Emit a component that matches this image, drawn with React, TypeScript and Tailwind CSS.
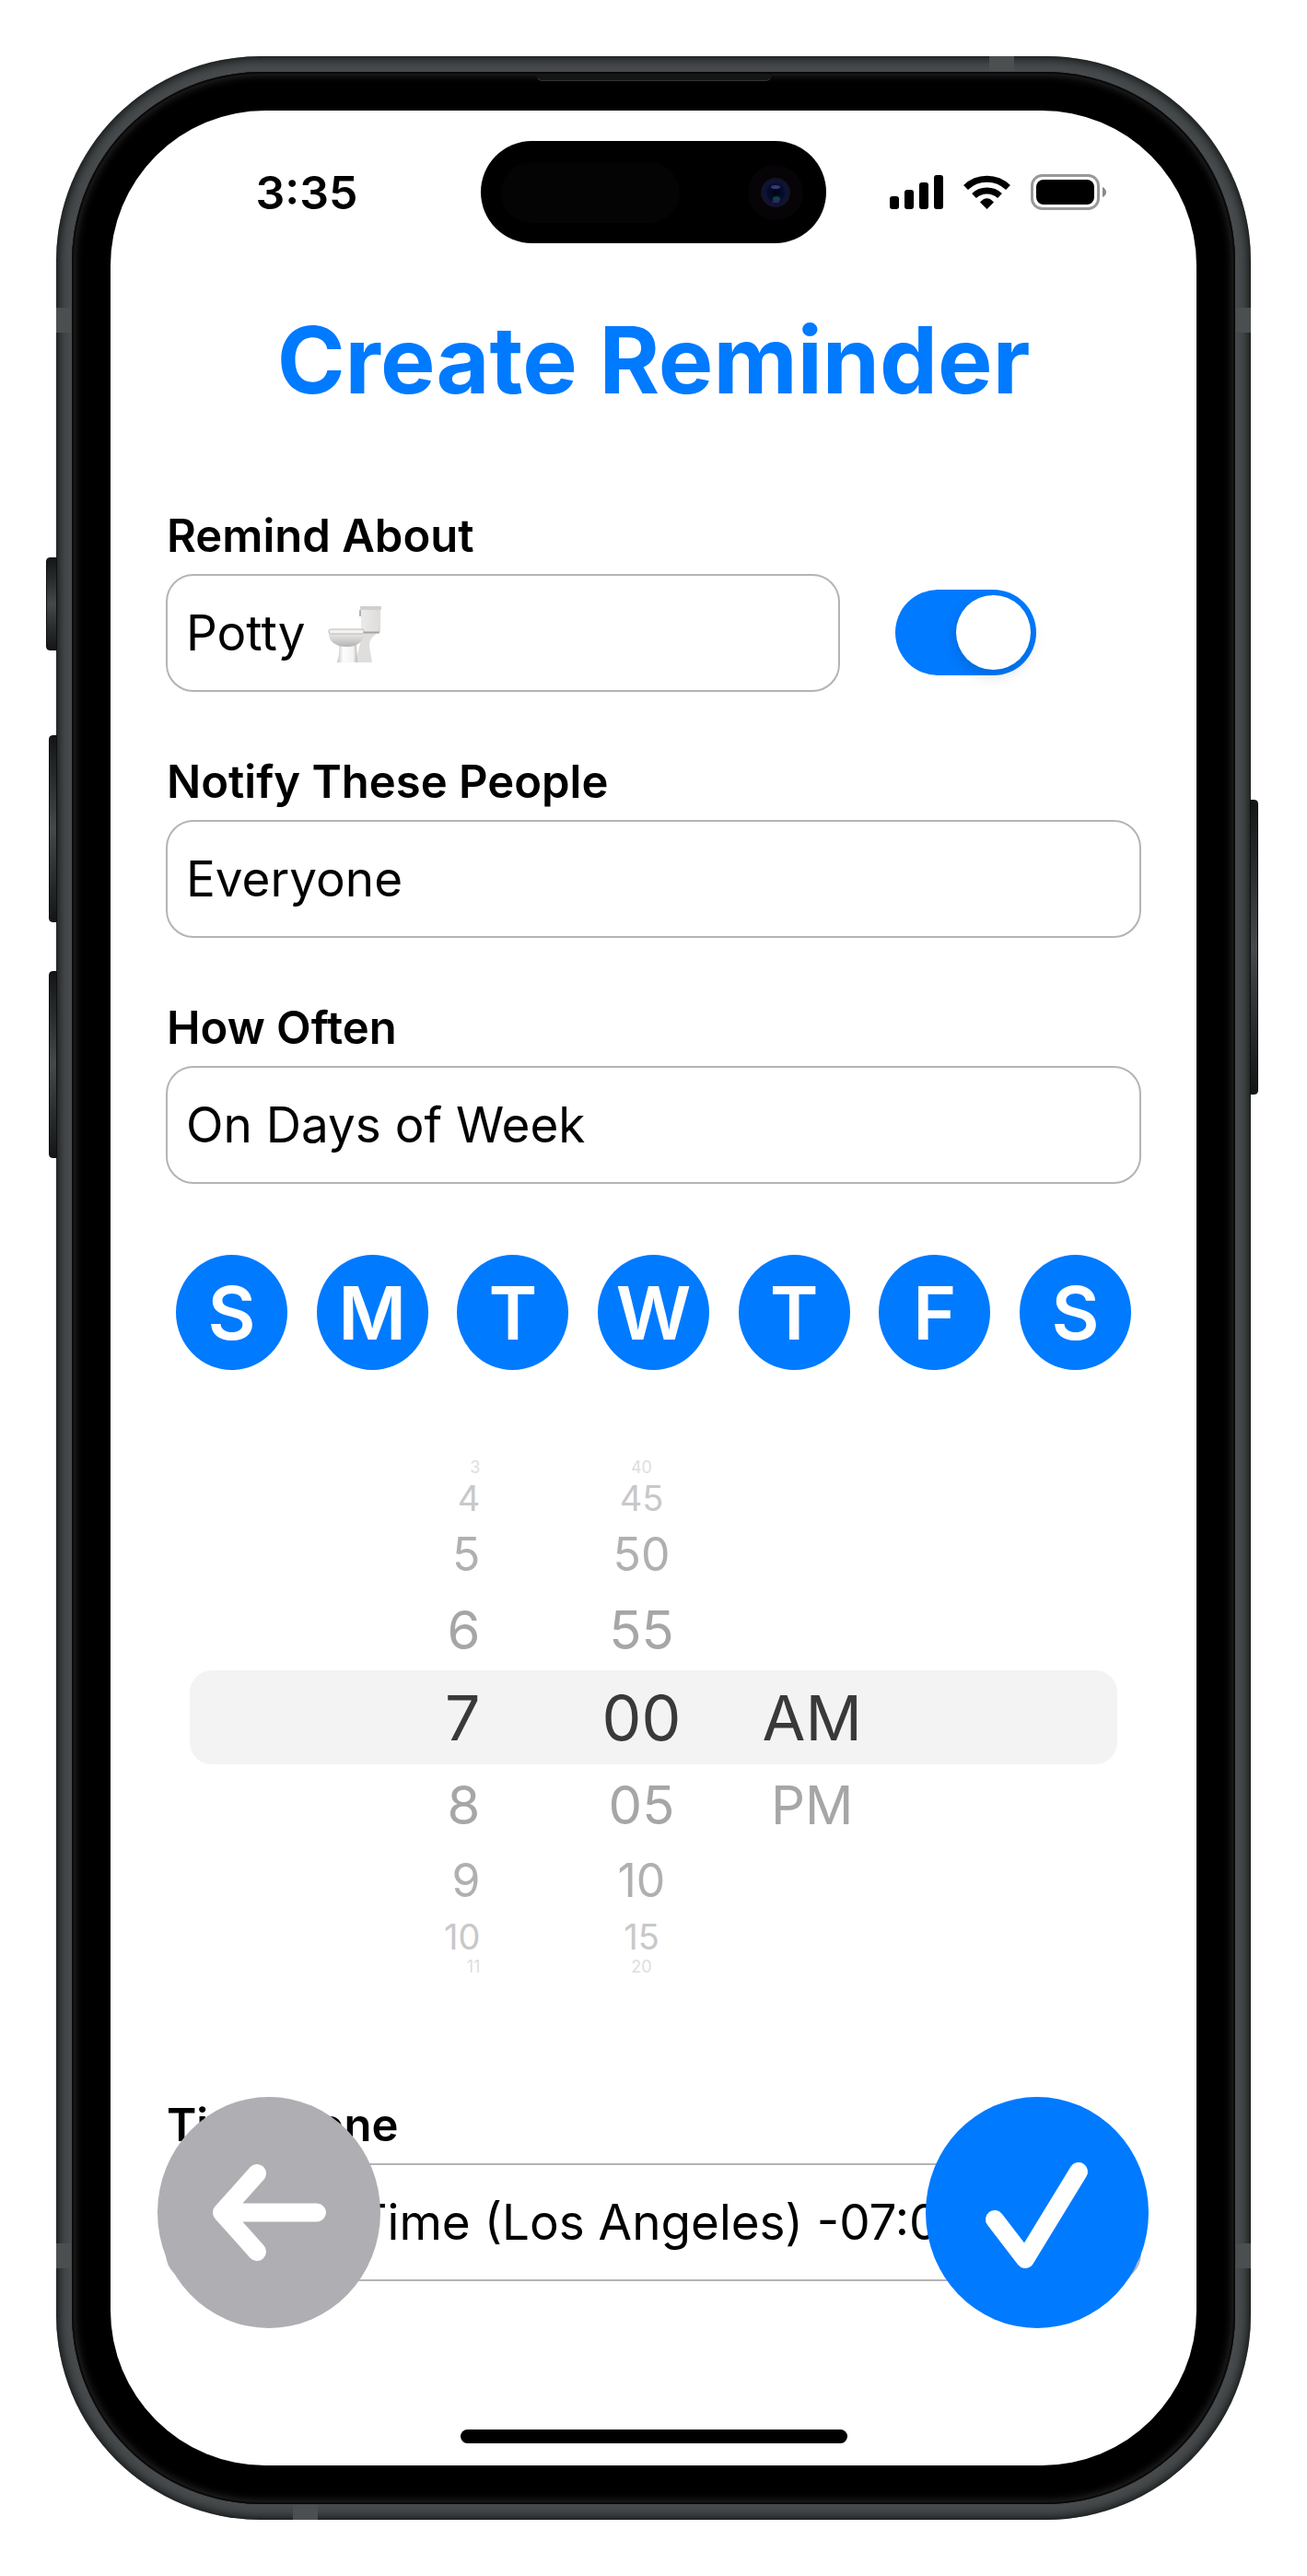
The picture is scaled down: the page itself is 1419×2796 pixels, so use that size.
import { useState } from "react";
import type { ReactNode } from "react";

const DAYS = ["S", "M", "T", "W", "T", "F", "S"];
const DAY_NAMES = ["Sunday", "Monday", "Tuesday", "Wednesday", "Thursday", "Friday", "Saturday"];

const ROWS = [
  { hour: "3", minute: "40", style: "h-5 text-[18px] text-[#dedede]" },
  { hour: "4", minute: "45", style: "h-[46px] text-[38px] text-[#c8c8c8]" },
  { hour: "5", minute: "50", style: "h-[76px] text-[50px] text-[#b0b0b0]" },
  { hour: "6", minute: "55", style: "h-[88px] text-[58px] text-[#a6a6a6]" },
  { hour: "7", minute: "00", period: "AM", style: "h-[102px] rounded-[24px] bg-[#f3f3f3] text-[68px] text-[#393939]" },
  { hour: "8", minute: "05", period: "PM", style: "h-[88px] text-[58px] text-[#a6a6a6]" },
  { hour: "9", minute: "10", style: "h-[76px] text-[50px] text-[#b0b0b0]" },
  { hour: "10", minute: "15", style: "h-[46px] text-[38px] text-[#c8c8c8]" },
  { hour: "11", minute: "20", style: "h-5 text-[18px] text-[#dedede]" },
];

function Toilet() {
  return (
    <svg className="h-[66px] w-[66px] shrink-0" viewBox="0 0 66 66" role="img" aria-label="toilet">
      <defs>
        <linearGradient id="tank" x1="0" x2="1">
          <stop offset="0" stopColor="#ebeae9" />
          <stop offset="1" stopColor="#dddcdb" />
        </linearGradient>
        <linearGradient id="bowl" x1="0" y1="0" x2="0" y2="1">
          <stop offset="0" stopColor="#efeeed" />
          <stop offset="1" stopColor="#b5b4b3" />
        </linearGradient>
        <linearGradient id="foot" x1="0" x2="1">
          <stop offset="0" stopColor="#c4c4c4" />
          <stop offset="0.3" stopColor="#fdfdfd" />
          <stop offset="0.8" stopColor="#f2f2f2" />
          <stop offset="1" stopColor="#b4b4b4" />
        </linearGradient>
      </defs>
      <path d="M40 31 H58 C50 35 47 40 47 46 L50 64 H32 Z" fill="#dfdedd" />
      <path d="M14 45 H33 L34 64 H12 Q15 55 14 45 Z" fill="url(#foot)" />
      <rect x="38" y="4" width="21" height="27" fill="url(#tank)" />
      <rect x="37" y="3" width="23" height="4" rx="1" fill="#d0cfce" />
      <path d="M37 7 V14" stroke="#b5b4b3" strokeWidth="2" />
      <path d="M3 31 C2 41 10 47 23 47 C35 47 41 41 41 31 Z" fill="url(#bowl)" />
      <rect x="3" y="28" width="38" height="5" rx="2" fill="#f2f1f0" stroke="#b8b7b5" strokeWidth="1" />
      <path d="M41 31.500 H58" stroke="#a5a4a3" strokeWidth="2" />
    </svg>
  );
}

function StatusIcons() {
  return (
    <svg className="h-[40px] w-[236px]" viewBox="966 188 236 40" aria-hidden="true">
      <rect x="966" y="212" width="10" height="14" rx="3" />
      <rect x="982" y="205" width="10" height="21" rx="3" />
      <rect x="998" y="197" width="10" height="29" rx="3" />
      <rect x="1014" y="189" width="10" height="37" rx="3" />
      <g fill="none" stroke="#000" strokeWidth="7">
        <path d="M1048.500 202.500 A33 33 0 0 1 1094.500 202.500" />
        <path d="M1057.500 211.500 A20.500 20.500 0 0 1 1085.500 211.500" />
      </g>
      <path d="M1071.500 226 L1064 218.500 Q1071.500 210 1079 218.500 Z" />
      <rect x="1120.500" y="189.500" width="72" height="36" rx="11" fill="none" stroke="#999" strokeWidth="3" />
      <rect x="1125" y="194" width="63" height="27" rx="8" />
      <path d="M1197 202 Q1201 204 1201 207.500 Q1201 211 1197 213 Z" fill="#8a8a8a" />
    </svg>
  );
}

function DynamicIsland() {
  return (
    <div className="flex h-[111px] w-[375px] shrink-0 items-center justify-between rounded-full bg-black pr-[25px] pl-[22px]">
      <span className="h-[66px] w-[194px] rounded-full bg-[#040404]" />
      <svg className="h-[60px] w-[60px]" viewBox="0 0 60 60" aria-hidden="true">
        <defs>
          <radialGradient id="lens">
            <stop offset="0" stopColor="#02030f" />
            <stop offset="0.7" stopColor="#060b2c" />
            <stop offset="1" stopColor="#0d1440" />
          </radialGradient>
        </defs>
        <circle cx="30" cy="30" r="30" fill="#060407" />
        <circle cx="30" cy="30" r="16" fill="#11142a" />
        <circle cx="30" cy="30" r="12" fill="url(#lens)" />
        <ellipse cx="30" cy="24" rx="5" ry="2" fill="#333a78" />
        <ellipse cx="31" cy="37" rx="4" ry="3" fill="#0f4148" />
        <ellipse cx="30" cy="40" rx="4" ry="1" fill="#4a1770" />
      </svg>
    </div>
  );
}

function Field({ id, label, children }: { id: string; label: string; children: ReactNode }) {
  return (
    <div className="flex flex-col gap-[10px]">
      <label htmlFor={id} className="px-px text-[49px] leading-[62px] font-semibold">
        {label}
      </label>
      {children}
    </div>
  );
}

const BOX = "h-[128px] rounded-[30px] border-2 border-[#b4b4b7] bg-white px-[20px] pt-[2px] text-[53px] text-black";

function PickerField({ id, label, value }: { id: string; label: string; value: string }) {
  return (
    <Field id={id} label={label}>
      <select id={id} defaultValue={value} className={`${BOX} w-full appearance-none`}>
        <option>{value}</option>
      </select>
    </Field>
  );
}

function Hardware() {
  const band = "absolute bg-[#4b4f50]";
  const key = "absolute border border-[#0d0f10] bg-linear-to-b from-[#141616] via-[#45494b] to-[#141616]";
  return (
    <div aria-hidden="true">
      <span className={`${key} top-[544px] -left-[11px] h-[101px] w-[12px] rounded-l-[4px]`} />
      <span className={`${key} top-[737px] -left-[8px] h-[203px] w-[9px] rounded-l-[4px]`} />
      <span className={`${key} top-[993px] -left-[8px] h-[203px] w-[9px] rounded-l-[4px]`} />
      <span className={`${key} top-[807px] -right-[8px] h-[320px] w-[9px] rounded-r-[4px]`} />
      <span className={`${band} top-[273px] left-0 h-[27px] w-[16px]`} />
      <span className={`${band} top-[273px] right-0 h-[27px] w-[16px]`} />
      <span className={`${band} bottom-[273px] left-0 h-[27px] w-[16px]`} />
      <span className={`${band} right-0 bottom-[273px] h-[27px] w-[16px]`} />
      <span className={`${band} top-0 right-[257px] h-[16px] w-[27px]`} />
      <span className={`${band} bottom-0 left-[257px] h-[16px] w-[27px]`} />
      <span className="absolute top-[19px] left-1/2 h-[8px] w-[255px] -translate-x-1/2 rounded-b-[6px] border-b border-[#333] bg-[#151717]" />
    </div>
  );
}

export default function App() {
  const [enabled, setEnabled] = useState(true);
  const [days, setDays] = useState(DAYS.map(() => true));

  return (
    <div className="bg-white p-[61px] font-['Inter',sans-serif] text-black">
      <div className="relative rounded-[222px] bg-[#474b4d] p-[17px] shadow-[inset_0_0_12px_2px_#0b0d0d]">
        <div className="rounded-[206px] bg-black p-[42px] shadow-[inset_0_0_0_2px_#0a0a0a,inset_0_0_10px_3px_#2c2c2c]">
          <main className="relative flex flex-col overflow-hidden rounded-[168px] bg-white px-[60px] pb-[200px]">
            <header className="-mx-[60px] flex items-center pt-[33px]">
              <time className="flex-1 pr-[4px] pl-[28px] text-center text-[50px] leading-[60px] font-semibold">3:35</time>
              <DynamicIsland />
              <div className="flex flex-1 justify-center pr-[30px] pl-[2px]">
                <StatusIcons />
              </div>
            </header>

            <h1 className="mt-[67px] text-center text-[100px] leading-[120px] font-bold text-[#007aff]">
              Create Reminder
            </h1>

            <form className="mt-[100px] flex flex-col gap-[67px]" onSubmit={(e) => e.preventDefault()}>
              <div className="flex items-end gap-[60px]">
                <div className="w-[732px]">
                  <Field id="about" label="Remind About">
                    <div className={`${BOX} flex items-center gap-[16px]`}>
                      <input id="about" defaultValue="Potty" className="w-[136px] bg-transparent outline-none" />
                      <Toilet />
                    </div>
                  </Field>
                </div>
                <label className="relative mb-[18px] h-[93px] w-[153px]">
                  <input
                    type="checkbox"
                    role="switch"
                    aria-label="Reminder enabled"
                    checked={enabled}
                    onChange={(e) => setEnabled(e.target.checked)}
                    className="peer block h-full w-full appearance-none rounded-full bg-[#e9e9eb] checked:bg-[#007aff]"
                  />
                  <span className="pointer-events-none absolute top-[6px] left-[6px] h-[81px] w-[81px] rounded-full bg-white shadow-[0_6px_16px_rgba(0,0,0,0.15)] peer-checked:right-[6px] peer-checked:left-auto" />
                </label>
              </div>
              <PickerField id="people" label="Notify These People" value="Everyone" />
              <PickerField id="often" label="How Often" value="On Days of Week" />

              <div className="mt-[10px] flex justify-between px-[11px]">
                {DAYS.map((day, i) => (
                  <button
                    key={DAY_NAMES[i]}
                    type="button"
                    aria-label={DAY_NAMES[i]}
                    aria-pressed={days[i]}
                    onClick={() => setDays(days.map((on, j) => (j === i ? !on : on)))}
                    className="h-[125px] w-[121px] rounded-[50%] bg-[#007aff] text-center text-[80px] leading-[123px] font-semibold text-white"
                  >
                    {day}
                  </button>
                ))}
              </div>

              <div role="group" aria-label="Time" className="mx-[26px] mt-[29px]">
                {ROWS.map((row) => (
                  <div
                    key={row.hour}
                    className={`grid grid-cols-[398fr_184fr_186fr_238fr] items-center leading-none ${row.style}`}
                  >
                    <button type="button" className="pr-[83px] text-right">{row.hour}</button>
                    <button type="button" className="text-center">{row.minute}</button>
                    {row.period && <button type="button" className="text-center">{row.period}</button>}
                  </div>
                ))}
              </div>

              <div className="mt-[64px]">
                <PickerField id="zone" label="Time Zone" value="Pacific Time (Los Angeles) -07:00" />
              </div>
            </form>

            <button
              type="button"
              aria-label="Back"
              className="absolute bottom-[149px] left-[51px] h-[251px] w-[242px] rounded-[50%] bg-[#aeaeb3]"
            >
              <svg className="h-full w-full" viewBox="171 2276 242 251" fill="none" stroke="#fff" strokeWidth="20" strokeLinecap="round" strokeLinejoin="round" aria-hidden="true">
                <path d="M344 2401.500 H245 M279 2359 L241 2401.500 L279 2444" />
              </svg>
            </button>
            <button
              type="button"
              aria-label="Save reminder"
              className="absolute right-[52px] bottom-[149px] h-[251px] w-[242px] rounded-[50%] bg-[#007aff]"
            >
              <svg className="h-full w-full" viewBox="1005 2276 242 251" fill="none" stroke="#fff" strokeWidth="20" strokeLinecap="round" strokeLinejoin="round" aria-hidden="true">
                <path d="M1080 2409 L1113 2452 L1171 2357" />
              </svg>
            </button>
            <span className="absolute bottom-[24px] left-1/2 h-[15px] w-[420px] -translate-x-1/2 rounded-full bg-black" />
          </main>
        </div>
        <Hardware />
      </div>
    </div>
  );
}
